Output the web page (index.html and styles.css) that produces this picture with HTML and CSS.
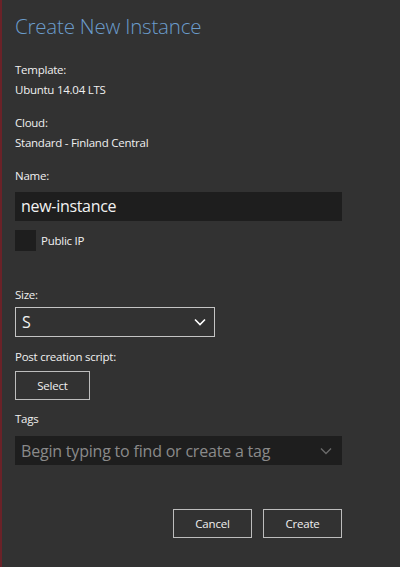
FILE: index.html
```html
<!DOCTYPE html>
<html>
<head>
<meta charset="utf-8">
<link rel="stylesheet" href="styles.css">
</head>
<body>
<div class="dialog">
  <h1 class="title">Create New Instance</h1>

  <div class="label first">Template:</div>
  <div class="value">Ubuntu 14.04 LTS</div>

  <div class="label gap">Cloud:</div>
  <div class="value">Standard - Finland Central</div>

  <div class="label gap">Name:</div>
  <div class="textbox">new-instance</div>

  <label class="check">
    <span class="box"></span>
    <span class="check-text">Public IP</span>
  </label>

  <div class="label size-label">Size:</div>
  <div class="combo">
    <span>S</span>
    <svg class="chev" width="12" height="8" viewBox="0 0 12 8"><path d="M1 1.5 L6 6.5 L11 1.5" fill="none" stroke="#ffffff" stroke-width="1.6"/></svg>
  </div>

  <div class="label post-label">Post creation script:</div>
  <button class="btn select-btn">Select</button>

  <div class="label tags-label">Tags</div>
  <div class="tagbox">
    <span class="placeholder">Begin typing to find or create a tag</span>
    <svg class="chev" width="12" height="8" viewBox="0 0 12 8"><path d="M1 1.5 L6 6.5 L11 1.5" fill="none" stroke="#6a6a6a" stroke-width="1.4"/></svg>
  </div>

  <div class="actions">
    <button class="btn action">Cancel</button>
    <button class="btn action">Create</button>
  </div>
</div>
</body>
</html>
```

FILE: styles.css
```css
html, body {
  margin: 0;
  padding: 0;
  height: 100%;
  background: #323232;
}

body {
  font-family: "Open Sans", "Noto Sans", sans-serif;
  color: #f0f0f0;
}

.dialog {
  box-sizing: border-box;
  height: 567px;
  border-left: 2px solid #6a2228;
  padding: 11px 58px 0 13px;
  display: flex;
  flex-direction: column;
  align-items: flex-start;
}

.title {
  margin: 0;
  font-weight: 300;
  font-size: 20.5px;
  line-height: 30px;
  color: #6b9ccc;
  letter-spacing: -0.2px;
}

.label, .value {
  font-size: 11.5px;
  line-height: 20px;
  letter-spacing: -0.25px;
}

.label.first { margin-top: 19px; }
.label.gap { margin-top: 13px; }

.textbox {
  box-sizing: border-box;
  margin-top: 6px;
  width: 327px;
  height: 29px;
  background: #1e1e1e;
  padding-left: 6px;
  font-size: 16px;
  line-height: 29px;
  letter-spacing: -0.3px;
  color: #f2f2f2;
}

.check {
  margin-top: 9px;
  display: flex;
  align-items: center;
  gap: 5px;
}

.box {
  width: 21px;
  height: 21px;
  background: #1e1e1e;
}

.check-text {
  font-size: 11.5px;
  letter-spacing: -0.25px;
  margin-top: -1px;
}

.size-label { margin-top: 34px; }

.combo {
  box-sizing: border-box;
  margin-top: 2px;
  width: 200px;
  height: 30px;
  border: 1px solid #c4c4c4;
  display: flex;
  align-items: center;
  justify-content: space-between;
  padding: 0 8px 0 6px;
  font-size: 16px;
  color: #f2f2f2;
}

.post-label { margin-top: 10px; }

.btn {
  box-sizing: border-box;
  background: transparent;
  border: 1px solid #bdbdbd;
  color: #f0f0f0;
  font-family: "Open Sans", "Noto Sans", sans-serif;
  font-size: 11.5px;
  letter-spacing: -0.2px;
  padding: 0;
}

.select-btn {
  margin-top: 4px;
  width: 75px;
  height: 29px;
}

.tags-label { margin-top: 9px; }

.tagbox {
  box-sizing: border-box;
  margin-top: 7px;
  width: 327px;
  height: 29px;
  background: #1e1e1e;
  display: flex;
  align-items: center;
  justify-content: space-between;
  padding: 0 10px 0 6px;
}

.placeholder {
  font-size: 16px;
  letter-spacing: -0.2px;
  color: #8a8a8a;
}

.actions {
  margin-top: 44px;
  align-self: stretch;
  display: flex;
  justify-content: flex-end;
  gap: 11px;
}

.action {
  width: 79px;
  height: 29px;
}
```
